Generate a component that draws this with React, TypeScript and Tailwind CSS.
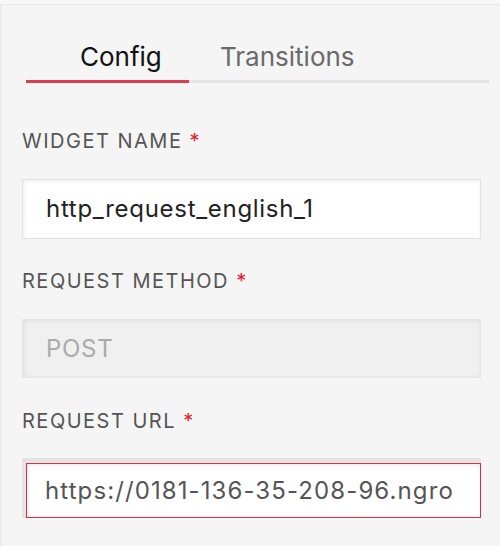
export default function App() {
    return <div className="w-[500px] h-[546px] bg-[#f5f5f5] font-['Inter',_'Liberation_Sans',_sans-serif] overflow-hidden">
        <div className="h-[5px] bg-[#f8f8f8] border-b border-[#e9e9e9]"></div>
        <div className="border-l-2 border-[#ececec] h-full pl-[20px] pr-[19px] pt-[34px]">
            <div className="flex ml-[4px] mr-[-8px] border-b-[3px] border-[#e5e5e5] text-[26px] leading-[32px]">
                <div className="w-[163px] pl-[54px] pt-[2px] pb-[7px] mb-[-3px] border-b-[3px] border-[#df3b52] text-[#111]">Config</div>
                <div className="pl-[31px] pt-[2px] pb-[7px] text-[#6a6a6a]">Transitions</div>
            </div>

            <Label text="WIDGET NAME" className="mt-[46px]" />
            <div className="mt-[26px] h-[60px] bg-white border border-[#e3e3e3] shadow-[inset_1px_1px_4px_rgba(0,0,0,0.08)] flex items-center pl-[23px] text-[24px] tracking-[0.7px] text-[#222]">
                http_request_english_1
            </div>

            <Label text="REQUEST METHOD" className="mt-[30px]" />
            <div className="mt-[26px] h-[59px] bg-[#f0f0f0] border border-[#e6e6e6] shadow-[inset_1px_1px_5px_rgba(0,0,0,0.07)] flex items-center pl-[23px] text-[24px] tracking-[0.7px] text-[#aaa]">
                POST
            </div>

            <Label text="REQUEST URL" className="mt-[31px]" />
            <div className="mt-[25px] h-[60px] bg-[#e4e4e4] pt-[5px] pl-[4px]">
                <div className="h-[55px] bg-white border-[1.5px] border-[#dc2f45] shadow-[inset_1px_1px_4px_rgba(0,0,0,0.1)] flex items-center pl-[18px] pr-[25px] text-[24px] tracking-[1.1px] text-[#555]">
                    <div className="overflow-hidden whitespace-nowrap">https://0181-136-35-208-96.ngrok.io</div>
                </div>
            </div>
        </div>
    </div>
}

function Label({ text, className }: { text: string, className?: string }) {
    return <div className={`text-[20px] leading-[24px] tracking-[1.5px] text-[#555] ${className ?? ''}`}>
        {text} <span className="text-[#e0202e]">*</span>
    </div>
}
